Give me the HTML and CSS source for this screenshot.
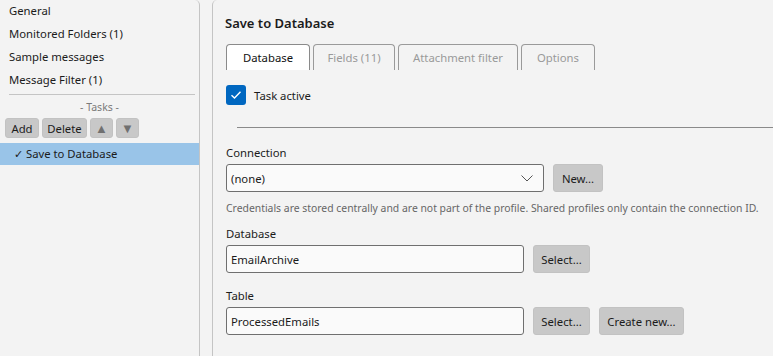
FILE: index.html
```html
<!DOCTYPE html>
<html lang="en">
  <head>
    <meta charset="UTF-8" />
    <title>Save to Database</title>
    <link rel="stylesheet" href="styles.css">
  </head>
  <body>
    <div class="main">
      <div class="sidebar">
        <div class="nav-item">General</div>
        <div class="nav-item">Monitored Folders (1)</div>
        <div class="nav-item">Sample messages</div>
        <div class="nav-item">Message Filter (1)</div>
        <div class="sep"></div>
        <div class="tasks-title">- Tasks -</div>
        <div class="task-buttons">
          <button class="btn small btn-add">Add</button>
          <button class="btn small btn-delete">Delete</button>
          <button class="btn small arrow">&#9650;</button>
          <button class="btn small arrow">&#9660;</button>
        </div>
        <div class="task-item selected">&#10003; Save to Database</div>
      </div>

      <div class="content">
        <h1>Save to Database</h1>
        <div class="tabs">
          <div class="tab tab-db active">Database</div>
          <div class="tab tab-fields">Fields (11)</div>
          <div class="tab tab-attach">Attachment filter</div>
          <div class="tab tab-options">Options</div>
        </div>

        <label class="check">
          <span class="box">
            <svg width="12" height="10" viewBox="0 0 12 10"><path d="M1.5 5.2 L4.5 8 L10.5 1.8" fill="none" stroke="#fff" stroke-width="1.4"/></svg>
          </span>
          Task active
        </label>

        <div class="rule"></div>

        <div class="field field-connection">
          <div class="label">Connection</div>
          <div class="row">
            <div class="combo">
              <span>(none)</span>
              <svg width="12" height="7" viewBox="0 0 12 7"><path d="M0.5 0.5 L6 6 L11.5 0.5" fill="none" stroke="#555" stroke-width="1"/></svg>
            </div>
            <button class="btn btn-new">New...</button>
          </div>
          <div class="hint">Credentials are stored centrally and are not part of the profile. Shared profiles only contain the connection ID.</div>
        </div>

        <div class="field field-database">
          <div class="label">Database</div>
          <div class="row">
            <div class="text-input">EmailArchive</div>
            <button class="btn btn-select">Select...</button>
          </div>
        </div>

        <div class="field field-table">
          <div class="label">Table</div>
          <div class="row">
            <div class="text-input">ProcessedEmails</div>
            <button class="btn btn-select">Select...</button>
            <button class="btn btn-create">Create new...</button>
          </div>
        </div>
      </div>
    </div>
  </body>
</html>
```

FILE: styles.css
```css
html, body {
  margin: 0;
  height: 100%;
}

body {
  background: #f3f3f3;
  color: #1b1b1b;
  font-family: "Noto Sans", "Open Sans", sans-serif;
  font-size: 11.3px;
  overflow: hidden;
}

.main {
  display: flex;
  height: 356px;
  gap: 12px;
}

/* left column */
.sidebar {
  width: 199px;
  flex-shrink: 0;
  border-right: 1px solid #c4c4c4;
  border-top-right-radius: 5px;
  display: flex;
  flex-direction: column;
}

.nav-item {
  height: 22px;
  line-height: 22px;
  padding-left: 9px;
  margin-top: 1px;
}
.nav-item:first-child {
  margin-top: 0;
}

.sep {
  height: 1px;
  background: #c4c4c4;
  margin: 3px 4px 0 9px;
}

.tasks-title {
  text-align: center;
  color: #7a7a7a;
  font-size: 10.5px;
  margin-top: 5px;
  height: 14px;
  line-height: 14px;
}

.task-buttons {
  display: flex;
  gap: 3px;
  padding-left: 5px;
  margin-top: 4px;
}

.btn {
  font-family: inherit;
  font-size: 11.3px;
  color: #1b1b1b;
  background: #c8c8c8;
  border: 1px solid #c2c2c2;
  border-radius: 3px;
  padding: 0;
  height: 28px;
  cursor: default;
}
.btn.small {
  height: 20px;
}
.btn-add { width: 34px; }
.btn-delete { width: 45px; }
.btn.arrow {
  width: 23px;
  color: #707070;
  font-size: 13px;
  line-height: 18px;
}

.task-item {
  margin-top: 5px;
  height: 22px;
  line-height: 22px;
  padding-left: 14px;
}
.task-item.selected {
  background: #99c4e8;
}

/* right column */
.content {
  flex: 1;
  border-left: 1px solid #c4c4c4;
  border-top-left-radius: 5px;
  padding-left: 13px;
}

h1 {
  font-size: 13px;
  font-weight: 600;
  margin: 13px 0 0 -1px;
  height: 20px;
  line-height: 20px;
}

.tabs {
  display: flex;
  gap: 3px;
  margin-top: 11px;
}
.tab {
  height: 25px;
  line-height: 25px;
  border: 1px solid #9a9a9a;
  border-bottom: none;
  border-radius: 4px 4px 0 0;
  color: #9a9a9a;
  text-align: center;
}
.tab-db { width: 82px; }
.tab-fields { width: 80px; }
.tab-attach { width: 118px; }
.tab-options { width: 72px; }
.tab.active {
  background: #ffffff;
  color: #111111;
  border-color: #8a8a8a;
}

.check {
  display: flex;
  align-items: center;
  gap: 8px;
  margin-top: 15px;
  height: 20px;
}
.box {
  width: 20px;
  height: 20px;
  border-radius: 3px;
  background: #0067c0;
  display: flex;
  align-items: center;
  justify-content: center;
}

.rule {
  height: 1px;
  background: #8a8a8a;
  margin: 22px 0 0 11px;
}

.field-connection { margin-top: 16px; }
.field-database { margin-top: 9px; }
.field-table { margin-top: 14px; }

.label {
  height: 18px;
  line-height: 18px;
  margin-bottom: 2px;
}
.row {
  display: flex;
  gap: 9px;
}

.combo, .text-input {
  background: #fafafa;
  border: 1px solid #6f6f6f;
  border-radius: 3px;
  height: 26px;
  display: flex;
  align-items: center;
  padding-left: 4px;
}
.combo {
  width: 302px;
  justify-content: space-between;
  padding-right: 10px;
}
.text-input {
  width: 292px;
}

.btn-new { width: 50px; }
.btn-select { width: 57px; }
.btn-create { width: 85px; }

.hint {
  color: #666666;
  font-size: 10.4px;
  margin-top: 8px;
  height: 16px;
  line-height: 16px;
  white-space: nowrap;
}
```
